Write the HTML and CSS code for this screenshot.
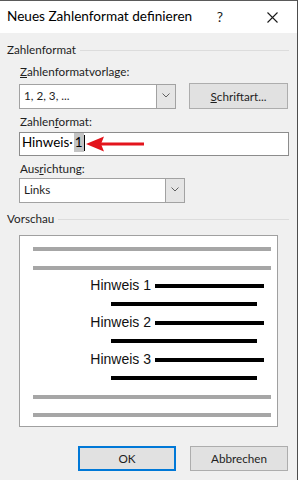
FILE: index.html
```html
<!DOCTYPE html>
<html lang="de">
<head>
  <meta charset="UTF-8">
  <meta name="viewport" content="width=device-width, initial-scale=1.0">
  <title>Neues Zahlenformat definieren</title>
  <link rel="stylesheet" href="styles.css">
</head>
<body>
  <div class="dialog">
    <div class="titlebar">
      <span class="title">Neues Zahlenformat definieren</span>
      <span class="tb-btn help">?</span>
      <span class="tb-btn close">
        <svg width="11" height="11" viewBox="0 0 11 11"><path d="M0.5 0.5L10.5 10.5M10.5 0.5L0.5 10.5" stroke="#1a1a1a" stroke-width="1.1" fill="none"/></svg>
      </span>
    </div>

    <div class="content">
      <div class="legend"><span>Zahlenformat</span><span class="rule"></span></div>

      <div class="group">
        <div class="label"><u>Z</u>ahlenformatvorlage:</div>
        <div class="row">
          <div class="combo combo-wide">
            <span class="combo-text">1, 2, 3, ...</span>
            <span class="combo-btn"><svg width="8" height="5" viewBox="0 0 8 5"><path d="M0.5 0.5L4 4L7.5 0.5" stroke="#606060" stroke-width="1" fill="none"/></svg></span>
          </div>
          <button class="btn btn-font"><u>S</u>chriftart...</button>
        </div>

        <div class="label">Zahlen<u>f</u>ormat:</div>
        <div class="field">
          <span class="field-text">Hinweis·<span class="mark">1</span><span class="caret"></span></span>
          <svg class="arrow" width="58" height="16" viewBox="0 0 58 16">
            <polygon points="0,8 18,0.5 15,8 18,15.5" fill="#e3141c"/>
            <rect x="15" y="6.5" width="43" height="3" fill="#e3141c"/>
          </svg>
        </div>

        <div class="label">Aus<u>r</u>ichtung:</div>
        <div class="combo combo-small">
          <span class="combo-text">Links</span>
          <span class="combo-btn"><svg width="8" height="5" viewBox="0 0 8 5"><path d="M0.5 0.5L4 4L7.5 0.5" stroke="#606060" stroke-width="1" fill="none"/></svg></span>
        </div>
      </div>

      <div class="legend legend-preview"><span>Vorschau</span><span class="rule"></span></div>

      <div class="group">
        <div class="preview">
          <div class="gray-line"></div>
          <div class="gray-line gap-small"></div>

          <div class="entry first">
            <span class="entry-text">Hinweis 1</span>
            <span class="bar"></span>
          </div>
          <div class="bar-second"></div>

          <div class="entry">
            <span class="entry-text">Hinweis 2</span>
            <span class="bar"></span>
          </div>
          <div class="bar-second"></div>

          <div class="entry">
            <span class="entry-text">Hinweis 3</span>
            <span class="bar"></span>
          </div>
          <div class="bar-second"></div>

          <div class="gray-line gap-big"></div>
          <div class="gray-line gap-bottom"></div>
        </div>
      </div>

      <div class="actions">
        <button class="btn btn-ok">OK</button>
        <button class="btn btn-cancel">Abbrechen</button>
      </div>
    </div>
  </div>
</body>
</html>
```

FILE: styles.css
```css
html {
  background-color: #ffffff;
}
body {
  margin: 0;
  padding: 0;
  font-family: Lato, 'Noto Sans', sans-serif;
  color: #000000;
}
.dialog {
  width: 297px;
  height: 480px;
  background-color: #f0f0f0;
  border-right: 1px solid #4d4d4d;
  overflow: hidden;
}
.titlebar {
  box-sizing: border-box;
  height: 33px;
  border-top: 1px solid #5a5a5a;
  background-color: #ffffff;
  display: flex;
  align-items: flex-start;
}
.title {
  flex: 1;
  padding-left: 7px;
  font-size: 13.6px;
  line-height: 31px;
  color: #000000;
  white-space: nowrap;
}
.tb-btn {
  width: 46px;
  height: 31px;
  display: flex;
  align-items: center;
  justify-content: center;
  font-size: 14px;
  color: #1a1a1a;
}
.help {
  margin-right: 6px;
}
.close {
  margin-right: 2px;
}
.close svg {
  display: block;
  margin-top: 1px;
}
.content {
  display: flow-root;
  padding: 0 8px 0 7px;
  font-size: 11.7px;
}
.legend {
  display: flex;
  align-items: flex-start;
  margin-top: 8px;
  height: 16px;
  line-height: 16px;
  color: #1e1e1e;
}
.legend .rule {
  flex: 1;
  height: 1px;
  margin: 9px 0 0 4px;
  background-color: #dcdcdc;
}
.legend-preview {
  margin-top: 7px;
}
.group {
  padding-left: 12px;
}
.label {
  height: 16px;
  line-height: 16px;
  padding-left: 1px;
  margin-top: 4px;
  color: #1e1e1e;
}
.group > .label:first-child {
  margin-top: 6px;
}
.row {
  display: flex;
  align-items: flex-start;
  height: 26px;
  margin-top: 4px;
}
.combo {
  box-sizing: border-box;
  height: 25px;
  display: flex;
  background-color: #ffffff;
  border: 1px solid #a2a2a2;
}
.combo-wide {
  width: 157px;
  margin-top: 1px;
}
.combo-small {
  width: 166px;
  margin-top: 2px;
}
.combo-text {
  flex: 1;
  padding-left: 4px;
  line-height: 21px;
  color: #1e1e1e;
}
.combo-btn {
  width: 18px;
  display: flex;
  align-items: center;
  justify-content: center;
  background-color: #e5e5e5;
  border-left: 1px solid #a2a2a2;
}
.combo-btn svg {
  display: block;
  margin-top: -3px;
}
.btn {
  box-sizing: border-box;
  font-family: Lato, 'Noto Sans', sans-serif;
  font-size: 11.7px;
  color: #1e1e1e;
  background-color: #e1e1e1;
  border: 1px solid #adadad;
  padding: 0;
  margin: 0;
}
.btn-font {
  width: 99px;
  height: 26px;
  line-height: 24px;
  margin-left: 13px;
}
.field {
  position: relative;
  box-sizing: border-box;
  height: 24px;
  width: 270px;
  margin-top: 3px;
  background-color: #ffffff;
  border: 1px solid #8c8c8c;
}
.field-text {
  display: block;
  padding-left: 2px;
  font-size: 13.4px;
  line-height: 19px;
  color: #000000;
}
.mark {
  display: inline-block;
  height: 19px;
  line-height: 19px;
  padding: 0 1px;
  margin-left: 1px;
  background-color: #c4c4c4;
  vertical-align: top;
}
.caret {
  display: inline-block;
  width: 1px;
  height: 16px;
  margin-top: 2px;
  background-color: #000000;
  vertical-align: top;
}
.arrow {
  position: absolute;
  left: 66px;
  top: 3px;
}
.preview {
  box-sizing: border-box;
  width: 259px;
  height: 192px;
  margin-top: 9px;
  padding-top: 11px;
  background-color: #ffffff;
  border: 1px solid #a0a0a0;
}
.gray-line {
  width: 238px;
  height: 4px;
  margin-left: 13px;
  background-color: #a6a6a6;
}
.gap-small {
  margin-top: 15px;
}
.gap-big {
  margin-top: 15px;
}
.gap-bottom {
  margin-top: 14px;
}
.entry {
  display: flex;
  align-items: flex-start;
  justify-content: flex-end;
  height: 18px;
  padding-right: 13px;
  margin-top: 8px;
}
.entry.first {
  margin-top: 7px;
}
.entry-text {
  font-family: 'Liberation Sans', Arial, sans-serif;
  font-size: 14px;
  line-height: 16px;
  color: #111111;
  margin-right: 4px;
}
.bar {
  width: 109px;
  height: 4px;
  margin-top: 7px;
  background-color: #000000;
}
.bar-second {
  width: 146px;
  height: 4px;
  margin: 7px 20px 0 auto;
  background-color: #000000;
}
.actions {
  display: flex;
  justify-content: flex-end;
  gap: 14px;
  margin-top: 19px;
  padding-right: 1px;
}
.btn-ok,
.btn-cancel {
  width: 98px;
  height: 25px;
}
.btn-ok {
  border: 2px solid #0078d7;
  line-height: 21px;
}
.btn-cancel {
  line-height: 23px;
}
```
